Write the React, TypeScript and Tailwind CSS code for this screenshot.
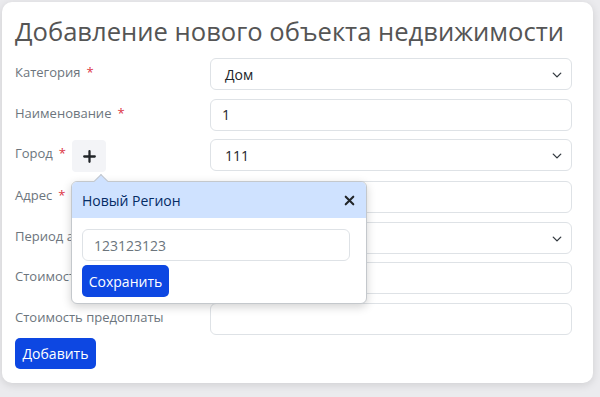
import React from 'react';

const Star: React.FC = () => <span className="text-[#dc3545] ml-[6px]">*</span>;

const Chevron: React.FC = () => (
  <svg width="10" height="10" viewBox="0 0 16 16" className="absolute right-[9px] top-[11px]">
    <path d="M2 5l6 6 6-6" fill="none" stroke="#343a40" strokeWidth="2.2" strokeLinecap="round" strokeLinejoin="round" />
  </svg>
);

const Field: React.FC<{ value?: string; select?: boolean }> = ({ value = '', select }) => (
  <div className="relative h-[32px] rounded-[6px] border border-[#dee2e6] bg-white flex items-center px-[11px] text-[14px] text-[#212529]">
    <span className={select ? 'pl-[3px]' : ''}>{value}</span>
    {select && <Chevron />}
  </div>
);

const Label: React.FC<{ text: string; req?: boolean }> = ({ text, req }) => (
  <div className="pt-[5px] text-[13px] text-[#6c757d] whitespace-nowrap">
    {text}
    {req && <Star />}
  </div>
);

const RegionPopover: React.FC = () => (
  <div className="absolute -left-[1px] top-[41px] w-[296px] z-10">
    <div className="absolute left-[25px] -top-[5px] w-[10px] h-[10px] rotate-45 bg-[#cfe2ff] border-l border-t border-[#c4c8cc]" />
    <div className="rounded-[6px] border border-[#c4c8cc] bg-white shadow-[0_3px_10px_rgba(0,0,0,0.18)] overflow-hidden">
      <div className="h-[36px] bg-[#cfe2ff] flex items-center justify-between pl-[10px] pr-[11px] text-[14px] text-[#052c65]">
        <span>Новый Регион</span>
        <svg width="11" height="11" viewBox="0 0 16 16">
          <path d="M2.5 2.5l11 11M13.5 2.5l-11 11" stroke="#212529" strokeWidth="3" strokeLinecap="round" />
        </svg>
      </div>
      <div className="px-[10px] pt-[11px] pb-[6px] flex flex-col gap-[4px]">
        <div className="h-[32px] w-[268px] rounded-[6px] border border-[#dee2e6] flex items-center px-[11px] text-[14px] text-[#6c757d]">
          123123123
        </div>
        <button className="h-[32px] w-[87px] rounded-[5px] bg-[#0d47e2] text-white text-[14px]">Сохранить</button>
      </div>
    </div>
  </div>
);

const App: React.FC = () => (
  <div className="min-h-screen bg-[#ebebee] p-[2px]" style={{ fontFamily: '"Open Sans", "Noto Sans", sans-serif' }}>
    <div className="w-[591px] h-[381px] bg-white rounded-[10px] shadow-[0_2px_8px_rgba(0,0,0,0.12)] pl-[13px] pt-[12px]">
      <h1 className="text-[25.6px] leading-[36px] text-[#555555] font-normal whitespace-nowrap">Добавление нового объекта недвижимости</h1>
      <div className="grid grid-cols-[195px_362px] gap-y-[8.7px] mt-[8px]">
        <Label text="Категория" req />
        <Field value="Дом" select />

        <Label text="Наименование" req />
        <Field value="1" />

        <div className="flex items-start text-[13px] text-[#6c757d]">
          <div className="pt-[5px]">
            Город
            <Star />
          </div>
          <div className="relative ml-[6px] mt-[1px]">
            <div className="w-[34px] h-[32px] bg-[#f3f4f7] rounded-[4px] flex items-center justify-center">
              <svg width="13" height="13" viewBox="0 0 16 16">
                <path d="M8 1.5v13M1.5 8h13" stroke="#212529" strokeWidth="2.8" strokeLinecap="round" />
              </svg>
            </div>
            <RegionPopover />
          </div>
        </div>
        <Field value="111" select />

        <Label text="Адрес" req />
        <Field />

        <Label text="Период аренды" />
        <Field select />

        <Label text="Стоимость" />
        <Field />

        <Label text="Стоимость предоплаты" />
        <Field />
      </div>
      <button className="mt-[3px] h-[31px] w-[81px] rounded-[5px] bg-[#0d47e2] text-white text-[14px]">Добавить</button>
    </div>
  </div>
);

export default App;
